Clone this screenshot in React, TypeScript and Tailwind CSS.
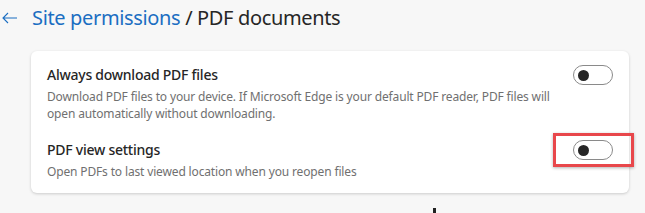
import React from "react";

function Toggle() {
  return (
    <div className="w-[40px] h-[20px] rounded-full border border-[#8a8a8a] bg-white flex items-center pl-[4px] shrink-0">
      <div className="w-[11px] h-[11px] rounded-full bg-[#262626]" />
    </div>
  );
}

export default function App() {
  return (
    <div className="w-[645px] h-[213px] bg-[#f7f7f7] overflow-hidden relative" style={{ fontFamily: '"Noto Sans", "Open Sans", sans-serif' }}>
      <div className="flex items-center h-[34px] pt-[1px]">
        <svg width="16" height="12" viewBox="0 0 16 12" className="ml-[2px] mr-[14px]">
          <path d="M6 1 L1 6 L6 11 M1 6 H15" fill="none" stroke="#1b6ec2" strokeWidth="1.1" />
        </svg>
        <div className="text-[20px] leading-[26px] tracking-[-0.35px]">
          <span className="text-[#1b6ec2]">Site permissions</span>
          <span className="text-[#262626]"> / PDF documents</span>
        </div>
      </div>
      <div className="ml-[31px] mt-[17px] w-[598px] bg-white rounded-[6px] shadow-[0_1px_3px_rgba(0,0,0,0.18)] pl-[16px] pr-[16px] pt-[14px] pb-[13px]">
        <div className="flex items-start justify-between">
          <div>
            <div className="text-[14px] leading-[20px] tracking-[-0.25px] text-[#262626] font-medium">Always download PDF files</div>
            <div className="text-[12px] leading-[17px] tracking-[-0.15px] text-[#707070] mt-[3px] w-[515px]">
              Download PDF files to your device. If Microsoft Edge is your default PDF reader, PDF files will open automatically without downloading.
            </div>
          </div>
          <Toggle />
        </div>
        <div className="flex items-start justify-between mt-[18px]">
          <div>
            <div className="text-[14px] leading-[20px] tracking-[-0.25px] text-[#262626] font-medium">PDF view settings</div>
            <div className="text-[12px] leading-[17px] tracking-[-0.15px] text-[#707070] mt-[3px]">
              Open PDFs to last viewed location when you reopen files
            </div>
          </div>
          <div className="relative">
            <Toggle />
            <div className="absolute left-[-20px] right-[-21px] top-[-7px] bottom-[-7px] border-[3px] border-[#e8474b] shadow-[0_1px_3px_rgba(0,0,0,0.3)]" />
          </div>
        </div>
      </div>
      <div className="absolute left-[433px] top-[208px] w-[3px] h-[5px] bg-[#222]" />
    </div>
  );
}
